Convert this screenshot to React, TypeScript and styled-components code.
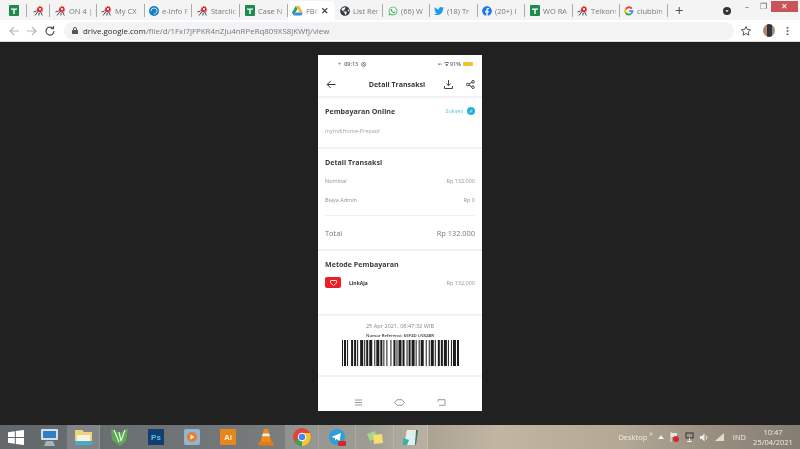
import React from "react";
import styled, { createGlobalStyle } from "styled-components";
import { FaFacebook, FaGlobeAmericas, FaTwitter, FaWhatsapp } from "react-icons/fa";

const Global = createGlobalStyle`
  html, body { margin: 0; padding: 0; background: #212121; }
  body { font-family: "Open Sans", "Liberation Sans", sans-serif; overflow: hidden; }
`;

const Screen = styled.div`
  width: 800px;
  height: 449px;
  display: flex;
  flex-direction: column;
  overflow: hidden;
`;

/* browser chrome */
const TabStrip = styled.div`
  height: 20px;
  display: flex;
  align-items: flex-end;
  background: #f4f4f4;
  filter: blur(0.4px);
`;
const Tab = styled.div<{ $w: number; $pad: number; $active?: boolean; $sep?: boolean }>`
  position: relative;
  width: ${(p) => p.$w}px;
  height: 19px;
  flex: none;
  box-sizing: border-box;
  display: flex;
  align-items: center;
  gap: 3px;
  padding-left: ${(p) => p.$pad}px;
  color: #74777b;
  font-size: 7.5px;
  white-space: nowrap;
  background: ${(p) => (p.$active ? "#fff" : "transparent")};
  border-radius: ${(p) => (p.$active ? "5px 5px 0 0" : "0")};
  &::after {
    content: "";
    display: ${(p) => (p.$sep ? "block" : "none")};
    position: absolute;
    right: 0;
    top: 3px;
    height: 13px;
    width: 1px;
    background: #a9abad;
  }
`;
const TabLabel = styled.span`
  flex: 1;
  min-width: 0;
  -webkit-mask-image: linear-gradient(90deg, #000 70%, transparent 100%);
  mask-image: linear-gradient(90deg, #000 70%, transparent 100%);
`;
const TabClose = styled.span`
  font-size: 9px;
  font-weight: 700;
  color: #444;
  padding-right: 6px;
`;
const StripTools = styled.div`
  flex: 1;
  height: 19px;
  display: flex;
  align-items: center;
  padding: 0 2px 0 7px;
  color: #555;
  font-size: 15px;
`;
const Plus = styled.span`
  width: 48px;
  line-height: 19px;
`;
const WindowButtons = styled.div`
  margin-left: auto;
  height: 19px;
  margin-top: -1px;
  display: flex;
  align-items: flex-start;
`;
const WinButton = styled.div<{ $close?: boolean }>`
  width: ${(p) => (p.$close ? 27 : 16)}px;
  height: 11px;
  display: flex;
  align-items: center;
  justify-content: center;
  background: ${(p) => (p.$close ? "#c8545a" : "transparent")};
  color: ${(p) => (p.$close ? "#fff" : "#555")};
  font-size: 8px;
  line-height: 1;
`;
const Toolbar = styled.div`
  height: 21px;
  display: flex;
  align-items: center;
  background: #fff;
  border-bottom: 1px solid #d8d8d8;
  padding: 0 10px 0 8px;
  gap: 6px;
  filter: blur(0.4px);
`;
const NavIcon = styled.svg`
  width: 12px;
  height: 12px;
  flex: none;
`;
const DotsIcon = styled.svg`
  width: 5px;
  height: 12px;
  flex: none;
  margin-left: 4px;
`;
const Omnibox = styled.div`
  flex: 1;
  height: 18px;
  margin-left: 2px;
  border-radius: 9px;
  background: #f1f3f4;
  display: flex;
  align-items: center;
  padding-left: 8px;
  gap: 5px;
  font-size: 7.9px;
  color: #75797e;
`;
const Host = styled.span`
  color: #2b2b2b;
`;
const Avatar = styled.div`
  width: 12px;
  height: 13px;
  margin-left: 5px;
  border-radius: 50%;
  background: linear-gradient(90deg, #b48a64 0 30%, #2f3342 30% 72%, #a98f78 72%);
`;

/* viewer area */
const Viewer = styled.main`
  flex: 1;
  background: #212121;
  display: flex;
  justify-content: center;
  padding-top: 13px;
`;
const Phone = styled.div`
  width: 164px;
  height: 356px;
  background: #fff;
  display: flex;
  flex-direction: column;
  color: #2b2e33;
  filter: blur(0.65px);
  font-family: "Open Sans", sans-serif;
`;
const StatusBar = styled.div`
  height: 18px;
  box-sizing: border-box;
  padding: 0 9px 0 20px;
  display: flex;
  align-items: center;
  gap: 3px;
  font-size: 5.5px;
  font-weight: 600;
  color: #666;
`;
const StatusRight = styled.span`
  margin-left: auto;
  display: flex;
  align-items: center;
  gap: 2px;
`;
const Battery = styled.span`
  width: 10px;
  height: 4px;
  border-radius: 1px;
  background: #f2c230;
`;
const Header = styled.div`
  height: 23px;
  padding: 0 7px 0 8px;
  display: flex;
  align-items: center;
`;
const HeaderTitle = styled.div`
  flex: 1;
  text-align: center;
  font-size: 7px;
  font-weight: 700;
  padding-left: 14px;
  color: #33363b;
`;
const HeaderIcons = styled.div`
  display: flex;
  gap: 13px;
`;
const Section = styled.section<{ $h: number }>`
  height: ${(p) => p.$h}px;
  box-sizing: border-box;
  border-top: 2px solid #f2f2f2;
  padding: 0 7px;
  display: flex;
  flex-direction: column;
`;
const Row = styled.div<{ $h: number; $line?: boolean }>`
  height: ${(p) => p.$h}px;
  flex: none;
  display: flex;
  align-items: center;
  justify-content: space-between;
`;
const TotalRow = styled(Row)`
  margin-top: 2px;
  border-top: 1px solid #efefef;
`;
const Title = styled.span`
  font-size: 7.1px;
  font-weight: 700;
  color: #3a3d42;
`;
const Small = styled.span<{ $c?: string }>`
  font-size: 5.5px;
  color: ${(p) => p.$c || "#8f9296"};
`;
const Total = styled.span`
  font-size: 7.4px;
  color: #75787c;
`;
const Status = styled.span`
  display: flex;
  align-items: center;
  gap: 4px;
`;
const Tick = styled.span`
  width: 8px;
  height: 8px;
  border-radius: 50%;
  background: #25b4d8;
  color: #fff;
  font-size: 5px;
  line-height: 8px;
  text-align: center;
`;
const Method = styled.span`
  display: flex;
  align-items: center;
  gap: 8px;
`;
const MethodLogo = styled.span`
  width: 16px;
  height: 11px;
  border-radius: 2px;
  background: #ee1c25;
  display: flex;
  align-items: center;
  justify-content: center;
`;
const MethodName = styled.span`
  font-size: 5px;
  font-weight: 700;
  color: #333;
`;
const Receipt = styled(Section)`
  align-items: center;
  padding-top: 7px;
`;
const DateText = styled.div`
  font-size: 5.6px;
  line-height: 7px;
  color: #85888c;
`;
const Ref = styled.div`
  font-size: 4.3px;
  line-height: 6px;
  margin-top: 2px;
  color: #333;
  font-weight: 600;
  white-space: nowrap;
`;
const Bars = styled.svg`
  width: 117px;
  height: 26px;
  margin-top: 2px;
  flex: none;
`;
const Spacer = styled.div`
  flex: 1;
  border-top: 2px solid #f2f2f2;
`;
const SoftKeys = styled.div`
  height: 18px;
  display: flex;
  justify-content: space-around;
  align-items: center;
  padding: 0 20px;
`;

/* windows taskbar */
const Taskbar = styled.footer`
  height: 24px;
  display: flex;
  align-items: center;
  background: linear-gradient(90deg, #62676b 0, #74787a 30%, #8b8a80 46%, #a89f8e 52%, #c0b6a2 62%, #b3a894 78%, #9b9182 88%, #857d72 100%);
  color: #efece6;
  filter: blur(0.3px);
`;
const TaskSlot = styled.div<{ $w: number; $on?: boolean }>`
  width: ${(p) => p.$w}px;
  height: 24px;
  flex: none;
  display: flex;
  align-items: center;
  justify-content: center;
  background: ${(p) => (p.$on ? "rgba(255,255,255,0.16)" : "transparent")};
  border-right: ${(p) => (p.$on ? "1px solid rgba(255,255,255,0.14)" : "0")};
  box-sizing: border-box;
`;
const AppBadge = styled.div<{ $bg: string; $c?: string }>`
  width: 16px;
  height: 16px;
  background: ${(p) => p.$bg};
  color: ${(p) => p.$c || "#fff"};
  font-size: 8px;
  font-weight: 700;
  font-family: "Liberation Sans", sans-serif;
  display: flex;
  align-items: center;
  justify-content: center;
`;
const Tray = styled.div`
  margin-left: auto;
  display: flex;
  align-items: center;
  font-size: 7.5px;
`;
const DesktopLabel = styled.span`
  margin-right: 2px;
`;
const Chevrons = styled.span`
  font-size: 7px;
  margin: -8px 5px 0 0;
`;
const TrayIcons = styled.div`
  display: flex;
  align-items: center;
  gap: 6px;
  margin-right: 9px;
`;
const Clock = styled.div`
  width: 54px;
  text-align: center;
  font-size: 7.5px;
  line-height: 10px;
`;

const Sheet = () => (
  <svg width="10" height="11" viewBox="0 0 10 11" style={{ flex: "none" }}>
    <rect width="10" height="11" rx="1" fill="#1f8a50" />
    <path d="M2 3.500h6v1.300H5.700V9H4.300V4.800H2z" fill="#fff" />
  </svg>
);
const Spider = () => (
  <svg width="11" height="11" viewBox="0 0 11 11" style={{ flex: "none" }}>
    <path d="M7 .5l.7 1.500 1.600-.5-.3 1.700 1.500.7-1.300 1 .6 1.500-1.700 0-.8 1.400-1.200-1.200-1.500.6V5.900L3.200 5l1.300-1L4 2.400l1.600.2z" fill="#d8262c" />
    <circle cx="7" cy="4.200" r="1.100" fill="#fff" />
    <path d="M5 6.500L2 10.500M6.200 7.500l-.4 3M7.800 7l1.500 3.500M3.500 6L.5 7" stroke="#333" strokeWidth=".9" />
  </svg>
);
const EdgeDot = () => (
  <svg width="10" height="10" viewBox="0 0 10 10" style={{ flex: "none" }}>
    <circle cx="5" cy="5" r="5" fill="#1a7fc4" />
    <path d="M2 5a3 3 0 0 1 6 0c0 1-1 3-3 3" stroke="#bfe6f5" strokeWidth="1" fill="none" />
  </svg>
);
const Drive = () => (
  <svg width="11" height="10" viewBox="0 0 11 10" style={{ flex: "none" }}>
    <path d="M3.800 0h3.400l3.600 6.200H7.400z" fill="#f5bf2a" />
    <path d="M3.800 0L0 6.400l1.700 3 3.700-6.300z" fill="#1fa463" />
    <path d="M1.700 9.600h7.600l1.600-3.200H3.500z" fill="#4285f4" />
  </svg>
);
const GoogleG = () => (
  <svg width="10" height="10" viewBox="0 0 10 10" style={{ flex: "none" }}>
    <path d="M8.600 2A4.500 4.500 0 0 0 1 2.500L2.600 3.700A2.700 2.700 0 0 1 7.100 3.200z" fill="#ea4335" />
    <path d="M1 2.500a4.500 4.500 0 0 0 0 5l1.600-1.200a2.700 2.700 0 0 1 0-2.600z" fill="#fbbc05" />
    <path d="M1 7.500a4.500 4.500 0 0 0 7 .6L6.500 6.900a2.700 2.700 0 0 1-3.900-.6z" fill="#34a853" />
    <path d="M5 4.200h4.400A4.500 4.500 0 0 1 8 8.100L6.500 6.900c.4-.3.7-.7.800-1.200H5z" fill="#4285f4" />
  </svg>
);

const tabs: { w: number; pad: number; icon: React.ReactNode; label?: string; active?: boolean; sep?: boolean }[] = [
  { w: 27, pad: 9, icon: <Sheet />, sep: true },
  { w: 23, pad: 6, icon: <Spider />, sep: true },
  { w: 47, pad: 5, icon: <Spider />, label: "ON 4 | L", sep: true },
  { w: 48, pad: 4, icon: <Spider />, label: "My CX", sep: true },
  { w: 47, pad: 4, icon: <EdgeDot />, label: "e-Info F", sep: true },
  { w: 48, pad: 5, icon: <Spider />, label: "Starclic", sep: true },
  { w: 48, pad: 5, icon: <Sheet />, label: "Case N", sep: true },
  { w: 47, pad: 4, icon: <Drive />, label: "FB6", active: true },
  { w: 48, pad: 5, icon: <FaGlobeAmericas size={10} color="#333a40" />, label: "List Rer", sep: true },
  { w: 47, pad: 5, icon: <FaWhatsapp size={10} color="#22b14c" />, label: "(66) W", sep: true },
  { w: 48, pad: 4, icon: <FaTwitter size={10} color="#1d9bf0" />, label: "(18) Tr", sep: true },
  { w: 47, pad: 4, icon: <FaFacebook size={10} color="#1877f2" />, label: "(20+) I", sep: true },
  { w: 48, pad: 5, icon: <Sheet />, label: "WO RA", sep: true },
  { w: 47, pad: 4, icon: <Spider />, label: "Telkom", sep: true },
  { w: 48, pad: 4, icon: <GoogleG />, label: "clubbin", sep: true },
];

const barWidths = [1, 1, 2, 1, 1, 3, 2, 1, 2, 1, 1, 2, 3, 1, 1, 1, 2, 1, 3, 2, 1, 1, 3, 1, 2, 1, 1, 2, 1, 3, 1, 2, 2, 1, 1, 1, 3, 1, 2, 2, 1, 1, 2, 1, 3, 1, 1, 2, 1, 1, 3, 2, 1, 2, 1, 1, 3, 1, 1, 2, 2, 1, 2, 1, 3, 1, 1, 2, 1, 1, 3, 1, 2];
const barTotal = barWidths.reduce((a, b) => a + b, 0);

const Barcode = () => {
  let x = 0;
  return (
    <Bars viewBox={`0 0 ${barTotal} 26`} preserveAspectRatio="none">
      {barWidths.map((w, i) => {
        const at = x;
        x += w;
        return i % 2 === 0 ? <rect key={i} x={at} y="0" width={w} height="26" fill="#1c1c1c" /> : null;
      })}
    </Bars>
  );
};

export default function App() {
  return (
    <Screen>
      <Global />
      <TabStrip>
        {tabs.map((t, i) => (
          <Tab key={i} $w={t.w} $pad={t.pad} $sep={t.sep} $active={t.active}>
            {t.icon}
            {t.label && <TabLabel>{t.label}</TabLabel>}
            {t.active && <TabClose>✕</TabClose>}
          </Tab>
        ))}
        <StripTools>
          <Plus>+</Plus>
          <svg width="8" height="8" viewBox="0 0 8 8">
            <circle cx="4" cy="4" r="4" fill="#333" />
            <path d="M2.300 3.200h3.400L4 5.200z" fill="#fff" />
          </svg>
          <WindowButtons>
            <WinButton>–</WinButton>
            <WinButton>❐</WinButton>
            <WinButton $close>✕</WinButton>
          </WindowButtons>
        </StripTools>
      </TabStrip>
      <Toolbar>
        <NavIcon viewBox="0 0 12 12">
          <path d="M11 6H2M6 2L2 6l4 4" stroke="#b5b7ba" strokeWidth="1.200" fill="none" />
        </NavIcon>
        <NavIcon viewBox="0 0 12 12">
          <path d="M1 6h9M6 2l4 4-4 4" stroke="#b5b7ba" strokeWidth="1.200" fill="none" />
        </NavIcon>
        <NavIcon viewBox="0 0 12 12">
          <path d="M10 6a4 4 0 1 1-1.200-2.800M9.500 1v2.700H6.800" stroke="#555" strokeWidth="1.200" fill="none" />
        </NavIcon>
        <Omnibox>
          <svg width="6" height="7" viewBox="0 0 6 7">
            <rect y="3" width="6" height="4" rx=".6" fill="#555" />
            <path d="M1.500 3V2a1.500 1.500 0 0 1 3 0v1" stroke="#555" fill="none" />
          </svg>
          <span>
            <Host>drive.google.com</Host>/file/d/1FxI7jFPKR4nZJu4nRPeRq809XS8jKWfj/view
          </span>
        </Omnibox>
        <NavIcon viewBox="0 0 12 12">
          <path d="M6 1.500l1.400 3 3.200.3-2.400 2.200.700 3.200L6 8.500l-2.900 1.700.7-3.200L1.400 4.800l3.200-.3z" stroke="#555" fill="none" />
        </NavIcon>
        <Avatar />
        <DotsIcon viewBox="0 0 5 12">
          <path d="M2.500 2v1.500M2.500 5.300v1.500M2.500 8.600v1.500" stroke="#555" strokeWidth="1.800" />
        </DotsIcon>
      </Toolbar>
      <Viewer>
        <Phone>
          <StatusBar>
            <span>+</span>
            <span>09:13</span>
            <span>◎</span>
            <StatusRight>
              ▪▫ ᯤ 91%
              <Battery />
            </StatusRight>
          </StatusBar>
          <Header>
            <svg width="10" height="9" viewBox="0 0 10 9">
              <path d="M9.500 4.500H1.200M4.700 1L1.200 4.500 4.700 8" stroke="#333" strokeWidth="1" fill="none" />
            </svg>
            <HeaderTitle>Detail Transaksi</HeaderTitle>
            <HeaderIcons>
              <svg width="9" height="9" viewBox="0 0 9 9">
                <path d="M4.500 0v5.500M2.300 3.500l2.200 2.200 2.200-2.200M.5 6v2.500h8V6" stroke="#444" fill="none" />
              </svg>
              <svg width="9" height="9" viewBox="0 0 9 9">
                <circle cx="1.800" cy="4.500" r="1.300" stroke="#444" fill="none" />
                <circle cx="7" cy="1.800" r="1.300" stroke="#444" fill="none" />
                <circle cx="7" cy="7.200" r="1.300" stroke="#444" fill="none" />
                <path d="M3 3.900l2.900-1.500M3 5.100l2.900 1.500" stroke="#444" />
              </svg>
            </HeaderIcons>
          </Header>
          <Section $h={51}>
            <Row $h={26}>
              <Title>Pembayaran Online</Title>
              <Status>
                <Small $c="#63c3dc">Sukses</Small>
                <Tick>✓</Tick>
              </Status>
            </Row>
            <Row $h={14}>
              <Small $c="#a3a5a8">myIndiHome-Prepaid</Small>
            </Row>
          </Section>
          <Section $h={102}>
            <Row $h={26}>
              <Title>Detail Transaksi</Title>
            </Row>
            <Row $h={12}>
              <Small>Nominal</Small>
              <Small>Rp 132.000</Small>
            </Row>
            <Row $h={26}>
              <Small>Biaya Admin</Small>
              <Small>Rp 0</Small>
            </Row>
            <TotalRow $h={33}>
              <Total>Total</Total>
              <Total>Rp 132.000</Total>
            </TotalRow>
          </Section>
          <Section $h={65}>
            <Row $h={26}>
              <Title>Metode Pembayaran</Title>
            </Row>
            <Row $h={11}>
              <Method>
                <MethodLogo>
                  <svg width="7" height="6" viewBox="0 0 7 6">
                    <path d="M.5.500h6v2.500L3.500 5.500.5 3z" stroke="#ffd5d5" fill="none" />
                  </svg>
                </MethodLogo>
                <MethodName>LinkAja</MethodName>
              </Method>
              <Small>Rp 132.000</Small>
            </Row>
          </Section>
          <Receipt $h={61}>
            <DateText>25 Apr 2021, 08:47:32 WIB</DateText>
            <Ref>Nomor Referensi: 6SP4D LNX48R</Ref>
            <Barcode />
          </Receipt>
          <Spacer />
          <SoftKeys>
            <svg width="9" height="7" viewBox="0 0 9 7">
              <path d="M1 1h7M1 3.500h7M1 6h7" stroke="#999" />
            </svg>
            <svg width="11" height="7" viewBox="0 0 11 7">
              <path d="M3 .7h5l2.300 2.800L8 6.300H3L.7 3.500z" stroke="#999" fill="none" />
            </svg>
            <svg width="9" height="7" viewBox="0 0 9 7">
              <path d="M1 .7h7v5.600H2M1 .7v2" stroke="#999" fill="none" />
            </svg>
          </SoftKeys>
        </Phone>
      </Viewer>
      <Taskbar>
        <TaskSlot $w={31}>
          <svg width="16" height="15" viewBox="0 0 16 15">
            <path d="M0 2.200L6.800 1.200V7H0zM7.800 1L16 0v7H7.800zM0 8h6.800v5.800L0 12.800zM7.800 8H16v7l-8.200-1.100z" fill="#fff" />
          </svg>
        </TaskSlot>
        <TaskSlot $w={36}>
          <svg width="19" height="19" viewBox="0 0 19 19">
            <rect x="1" y="1" width="17" height="11" rx="1" fill="#d6dfe6" />
            <rect x="3" y="3" width="13" height="7" fill="#2f7fc1" />
            <path d="M6 13h7l2 5H4z" fill="#a9b2b8" />
          </svg>
        </TaskSlot>
        <TaskSlot $w={33} $on>
          <svg width="19" height="17" viewBox="0 0 19 17">
            <path d="M1 1h7l2 2h8v13H1z" fill="#efd27a" />
            <rect x="3" y="6" width="13" height="6" fill="#f7f3e2" />
            <path d="M1 12h17v4H1z" fill="#4aa8c9" />
          </svg>
        </TaskSlot>
        <TaskSlot $w={38}>
          <svg width="19" height="18" viewBox="0 0 19 18">
            <path d="M1 1l9 4 8-5-2 13-6 5-8-6z" fill="#5fa858" />
            <path d="M4 2l5 12M9 4l2 9M15 2l-4 11" stroke="#e6f2dd" strokeWidth="1.200" />
          </svg>
        </TaskSlot>
        <TaskSlot $w={36}>
          <AppBadge $bg="#123f70" $c="#5cc0f0">Ps</AppBadge>
        </TaskSlot>
        <TaskSlot $w={36}>
          <svg width="16" height="16" viewBox="0 0 16 16">
            <rect width="16" height="16" rx="2" fill="#8fb7cf" />
            <circle cx="8" cy="8" r="5" fill="#f0792b" />
            <path d="M6.500 5.500l4 2.500-4 2.500z" fill="#fff" />
          </svg>
        </TaskSlot>
        <TaskSlot $w={36}>
          <AppBadge $bg="#e8861e" $c="#fff1d8">Ai</AppBadge>
        </TaskSlot>
        <TaskSlot $w={39}>
          <svg width="16" height="17" viewBox="0 0 16 17">
            <path d="M6 0h4l3.500 13h-11z" fill="#f08a1d" />
            <path d="M4.800 4.500h6.400l.7 2.800H4.100z" fill="#f6f0e6" />
            <rect x="0.500" y="13" width="15" height="3.500" rx="1" fill="#e87a14" />
          </svg>
        </TaskSlot>
        <TaskSlot $w={34} $on>
          <svg width="18" height="18" viewBox="0 0 18 18">
            <circle cx="9" cy="9" r="9" fill="#e0443a" />
            <path d="M9 9L1.200 13.500A9 9 0 0 0 9 18a9 9 0 0 0 1.500-.1z" fill="#36a852" />
            <path d="M9 5h7.900A9 9 0 0 1 9 18z" fill="#f8c42b" />
            <circle cx="9" cy="9" r="4.200" fill="#fff" />
            <circle cx="9" cy="9" r="3.200" fill="#4285f4" />
          </svg>
        </TaskSlot>
        <TaskSlot $w={37} $on>
          <svg width="19" height="19" viewBox="0 0 19 19">
            <circle cx="9" cy="9" r="8" fill="#2c9fd9" />
            <path d="M3.500 9L13 5l-1.500 8-3-2-1.500 1.500L7 10z" fill="#fff" />
            <rect x="10" y="13" width="8" height="5" rx="1" fill="#d3272d" />
          </svg>
        </TaskSlot>
        <TaskSlot $w={38} $on>
          <svg width="18" height="15" viewBox="0 0 18 15">
            <path d="M1 4l8-3 2 7-7 3z" fill="#a8d48a" />
            <path d="M7 5l9-1 1 9-9 1z" fill="#f2e070" />
          </svg>
        </TaskSlot>
        <TaskSlot $w={34} $on>
          <svg width="17" height="17" viewBox="0 0 17 17">
            <path d="M5 1h10l-2 15H2z" fill="#dff0ee" />
            <path d="M1 9l6 2-2 5H1z" fill="#37b1a7" />
            <path d="M14 1h2l-2 15h-1z" fill="#3a6f6a" />
          </svg>
        </TaskSlot>
        <Tray>
          <DesktopLabel>Desktop</DesktopLabel>
          <Chevrons>»</Chevrons>
          <TrayIcons>
            <svg width="6" height="4" viewBox="0 0 6 4">
              <path d="M3 0l3 4H0z" fill="#eee" />
            </svg>
            <svg width="9" height="10" viewBox="0 0 9 10">
              <path d="M1 0v10" stroke="#eee" />
              <path d="M1 1h6v4H1z" fill="#e9e5dc" />
              <circle cx="6" cy="7" r="3" fill="#d8262c" />
            </svg>
            <svg width="9" height="10" viewBox="0 0 9 10">
              <rect x="1" y="1" width="7" height="5" fill="none" stroke="#333" />
              <path d="M4.500 6v3M2 9.500h5" stroke="#eee" />
            </svg>
            <svg width="9" height="9" viewBox="0 0 9 9">
              <path d="M0 3h2l2.500-2.500v8L2 6H0z" fill="#eee" />
              <path d="M6 2.500a3 3 0 0 1 0 4" stroke="#eee" fill="none" />
            </svg>
            <svg width="9" height="8" viewBox="0 0 9 8">
              <path d="M0 8L9 0v8z" fill="#dfdcd2" />
            </svg>
          </TrayIcons>
          <span>IND</span>
          <Clock>
            10:47
            <br />
            25/04/2021
          </Clock>
        </Tray>
      </Taskbar>
    </Screen>
  );
}
